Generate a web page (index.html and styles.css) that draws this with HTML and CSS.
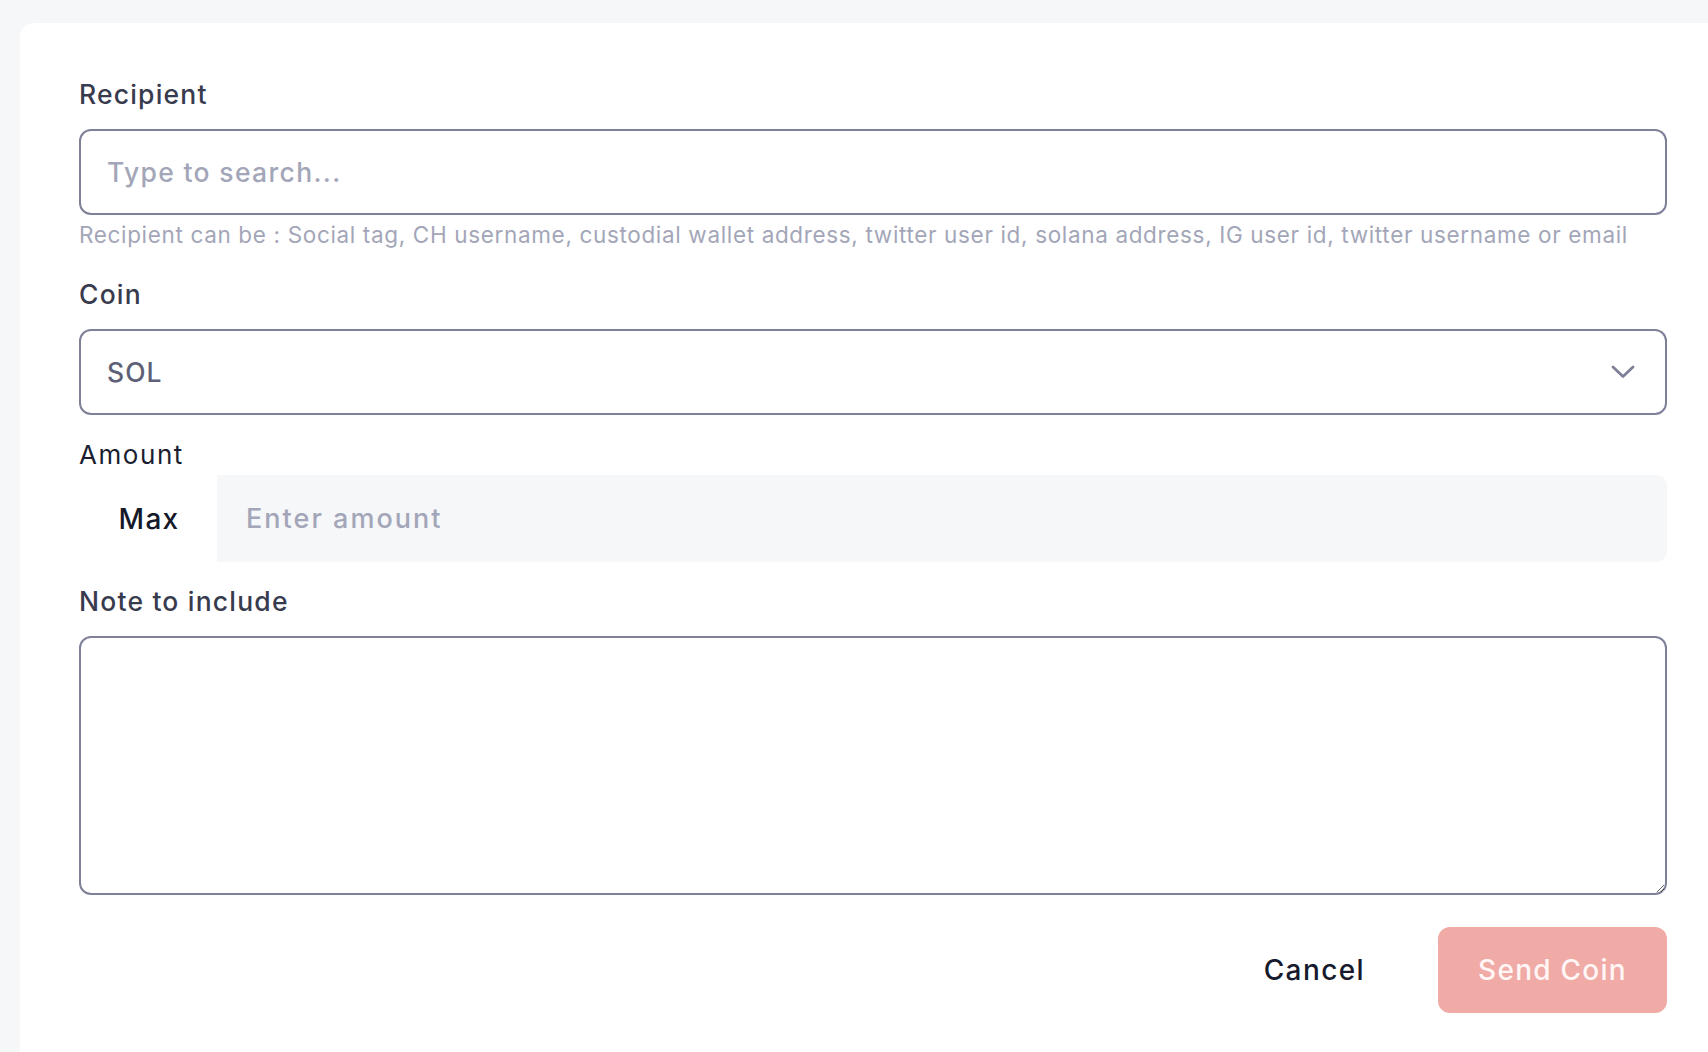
FILE: index.html
```html
<!DOCTYPE html>
<html lang="en">
<head>
<meta charset="utf-8">
<title>Send Coin</title>
<link rel="stylesheet" href="styles.css">
</head>
<body>
<div class="card">
  <form class="form">
    <div class="field">
      <label class="label" for="recipient">Recipient</label>
      <input class="control" id="recipient" type="text" placeholder="Type to search...">
      <p class="hint">Recipient can be : Social tag, CH username, custodial wallet address, twitter user id, solana address, IG user id, twitter username or email</p>
    </div>
    <div class="field field-coin">
      <label class="label" for="coin">Coin</label>
      <div class="select">
        <span class="select-value">SOL</span>
        <svg class="chevron" width="24" height="14" viewBox="0 0 24 14" fill="none">
          <path d="M2 2 L12 11.5 L22 2" stroke="#7e8097" stroke-width="2.8" stroke-linecap="round" stroke-linejoin="round"/>
        </svg>
      </div>
    </div>
    <div class="field field-amount">
      <label class="label label-amount" for="amount">Amount</label>
      <div class="amount-row">
        <button type="button" class="max">Max</button>
        <input class="amount-input" id="amount" type="text" placeholder="Enter amount">
      </div>
    </div>
    <div class="field field-note">
      <label class="label" for="note">Note to include</label>
      <textarea class="note" id="note"></textarea>
    </div>
    <div class="actions">
      <button type="button" class="btn-cancel">Cancel</button>
      <button type="button" class="btn-send">Send Coin</button>
    </div>
  </form>
</div>
</body>
</html>
```
FILE: styles.css
```css
* { box-sizing: border-box; }
html, body {
  margin: 0;
  padding: 0;
  background: #f6f7f9;
  font-family: Inter, "Noto Sans", sans-serif;
  overflow: hidden;
}
.card {
  margin: 23px 0 0 20px;
  background: #ffffff;
  border-top-left-radius: 14px;
  padding: 53px 41px 0 59px;
  height: calc(100vh - 23px);
}
.form {
  display: flex;
  flex-direction: column;
}
.field {
  display: flex;
  flex-direction: column;
}
.label {
  font-size: 26.5px;
  line-height: 36px;
  font-weight: 500;
  color: #383b4e;
  letter-spacing: 0.045em;
  margin-bottom: 17px;
}
.control {
  height: 86px;
  border: 2px solid #7f8199;
  border-radius: 12px;
  padding: 0 26px;
  font-family: inherit;
  font-size: 26.5px;
  font-weight: 500;
  letter-spacing: 0.05em;
  color: #383b4e;
  outline: none;
  background: #fff;
}
.control::placeholder { color: #a3a6b8; }
.hint {
  margin: 5px 0 0 0;
  font-size: 22.5px;
  line-height: 30px;
  color: #a3a6b8;
  letter-spacing: 0.029em;
  white-space: nowrap;
}
.field-coin { margin-top: 26px; }
.select {
  height: 86px;
  border: 2px solid #7f8199;
  border-radius: 12px;
  padding: 0 30px 0 26px;
  display: flex;
  align-items: center;
  justify-content: space-between;
}
.select-value {
  font-size: 26.5px;
  font-weight: 500;
  letter-spacing: 0.04em;
  color: #5d6077;
}
.field-amount { margin-top: 22px; }
.label-amount {
  font-size: 26px;
  font-weight: 400;
  color: #1b1e30;
  letter-spacing: 0.06em;
  margin-bottom: 2px;
}
.amount-row {
  display: flex;
  height: 87px;
}
.max {
  width: 138px;
  flex: none;
  border: none;
  background: transparent;
  font-family: inherit;
  font-size: 28px;
  font-weight: 500;
  letter-spacing: 0.045em;
  color: #151829;
  padding: 0 0 0 2px;
}
.amount-input {
  flex: 1;
  border: none;
  background: #f6f7f9;
  border-radius: 0 11px 11px 0;
  padding: 0 29px;
  font-family: inherit;
  font-size: 27px;
  font-weight: 500;
  letter-spacing: 0.075em;
  color: #383b4e;
  outline: none;
}
.amount-input::placeholder { color: #a3a6b8; }
.field-note { margin-top: 21px; }
.note {
  height: 259px;
  border: 2px solid #7f8199;
  border-radius: 12px;
  padding: 20px 26px;
  font-family: inherit;
  font-size: 26.5px;
  resize: vertical;
  outline: none;
  display: block;
}
.actions {
  margin-top: 32px;
  display: flex;
  justify-content: flex-end;
  align-items: center;
  gap: 49px;
}
.btn-cancel {
  height: 86px;
  padding: 0 24px;
  border: none;
  background: transparent;
  font-family: inherit;
  font-size: 28px;
  font-weight: 500;
  letter-spacing: 0.05em;
  color: #161a2c;
}
.btn-send {
  height: 86px;
  width: 229px;
  border: none;
  border-radius: 12px;
  background: #f0aba7;
  font-family: inherit;
  font-size: 28px;
  font-weight: 500;
  letter-spacing: 0.045em;
  color: #fff6f5;
}
```
